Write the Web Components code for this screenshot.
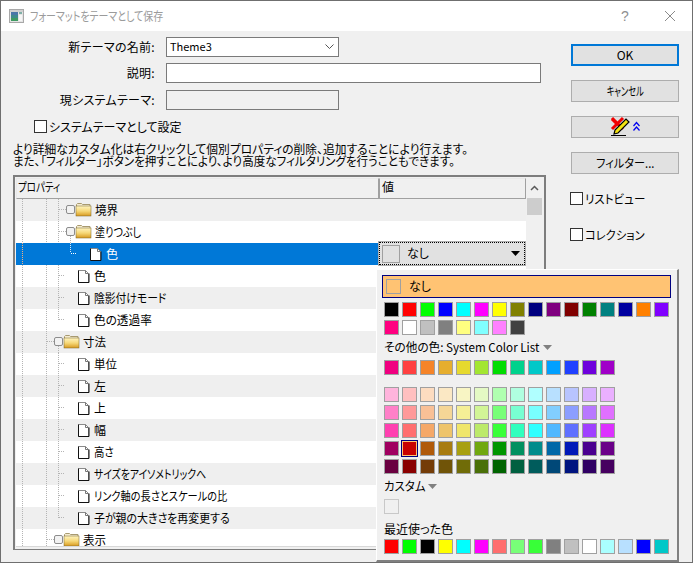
<!DOCTYPE html>
<html lang="ja">
<head>
<meta charset="utf-8">
<title>フォーマットをテーマとして保存</title>
<style>
  html, body { margin: 0; padding: 0; background: #f0f0f0; }
  body { font: 12px "Noto Sans CJK JP", "Liberation Sans", sans-serif; color: #000; }
</style>
</head>
<body>
<theme-dialog>
  <title-bar slot="title">フォーマットをテーマとして保存</title-bar>

  <form-row slot="left" label="新テーマの名前:" kind="combo" width="173" value="Theme3"></form-row>
  <form-row slot="left" label="説明:" kind="text" width="375" gap="6"></form-row>
  <form-row slot="left" label="現システムテーマ:" kind="readonly" width="173" gap="7"></form-row>
  <check-box slot="left" style="margin:10px 0 0 21px">システムテーマとして設定</check-box>
  <help-text slot="left"></help-text>

  <prop-grid slot="left">
    <tree-row depth="2" kind="folder" lines="22 46 58" alt style="--sx:.96">境界</tree-row>
    <tree-row depth="2" kind="folder" lines="22 46 58" open style="--sx:.84">塗りつぶし</tree-row>
    <tree-row depth="3" kind="file" lines="22" selected>色<value-button slot="value">なし</value-button></tree-row>
    <tree-row depth="2" kind="file" lines="22 46 58">色</tree-row>
    <tree-row depth="2" kind="file" lines="22 46 58" alt style="--sx:.9">陰影付けモード</tree-row>
    <tree-row depth="2" kind="file" lines="22 46" half="58" style="--sx:.97">色の透過率</tree-row>
    <tree-row depth="1" kind="folder" lines="22 46" alt open style="--sx:.96">寸法</tree-row>
    <tree-row depth="2" kind="file" lines="22 46 58" style="--sx:.96">単位</tree-row>
    <tree-row depth="2" kind="file" lines="22 46 58" alt>左</tree-row>
    <tree-row depth="2" kind="file" lines="22 46 58">上</tree-row>
    <tree-row depth="2" kind="file" lines="22 46 58" alt>幅</tree-row>
    <tree-row depth="2" kind="file" lines="22 46 58" style="--sx:.87">高さ</tree-row>
    <tree-row depth="2" kind="file" lines="22 46 58" alt style="--sx:.82">サイズをアイソメトリックへ</tree-row>
    <tree-row depth="2" kind="file" lines="22 46 58" style="--sx:.85">リンク軸の長さとスケールの比</tree-row>
    <tree-row depth="2" kind="file" lines="22 46" half="58" alt style="--sx:.91">子が親の大きさを再変更する</tree-row>
    <tree-row depth="1" kind="folder" lines="22 46" style="--sx:.96">表示</tree-row>
  </prop-grid>

  <push-button slot="right" default>OK</push-button>
  <push-button slot="right" style="--sx:.68">キャンセル</push-button>
  <push-button slot="right">
    <svg width="34" height="22" viewBox="0 0 34 22" style="display:block;margin-left:4px" shape-rendering="crispEdges">
      <path d="M2 3l11 11M13 3L2 14" stroke="#f00000" stroke-width="3" fill="none" shape-rendering="auto"/>
      <path d="M5 15L16 4l3 3L8 18l-4 1z" fill="#f4e310" stroke="#000" stroke-width="1.200" shape-rendering="auto"/>
      <path d="M2 4l6 6" stroke="#f00000" stroke-width="3" fill="none" shape-rendering="auto"/>
      <rect x="1" y="20" width="15" height="1" fill="#000"/>
      <path d="M23.500 11l3-3.500 3 3.500M23.500 15.500l3-3.500 3 3.500" stroke="#0000f0" stroke-width="1.200" fill="none" shape-rendering="auto"/>
    </svg>
  </push-button>
  <push-button slot="right" style="--sx:.93">フィルター...</push-button>
  <check-box slot="right" style="margin:4px 0 0 -1px;--sx:.96">リストビュー</check-box>
  <check-box slot="right" style="margin:23px 0 0 -1px;--sx:.94">コレクション</check-box>

  <color-popup slot="popup"></color-popup>
</theme-dialog>

<script>
class ThemeDialog extends HTMLElement {
  constructor () {
    super()
    this.attachShadow({ mode: 'open' })
  }

  connectedCallback () {
    this.shadowRoot.innerHTML = `
      <style>
        :host {
          display: flex;
          flex-direction: column;
          position: relative;
          box-sizing: border-box;
          width: 693px;
          height: 563px;
          border: 1px solid #6f6f6f;
          background: #f0f0f0;
          overflow: hidden;
        }
        .body {
          display: flex;
          gap: 25px;
          padding-left: 12px;
          flex: 1;
          min-height: 0;
        }
        .left { display: flex; flex-direction: column; width: 533px; padding-top: 6px; }
        .right { display: flex; flex-direction: column; width: 108px; padding-top: 13px; }
      </style>
      <slot name="title"></slot>
      <div class="body">
        <div class="left"><slot name="left"></slot></div>
        <div class="right"><slot name="right"></slot></div>
      </div>
      <slot name="popup"></slot>
    `
  }
}

class TitleBar extends HTMLElement {
  constructor () {
    super()
    this.attachShadow({ mode: 'open' })
  }

  connectedCallback () {
    this.shadowRoot.innerHTML = `
      <style>
        :host {
          display: flex;
          align-items: center;
          flex: none;
          height: 30px;
          background: #fff;
          color: #9b9b9b;
          font-size: 12px;
          padding-left: 8px;
        }
        svg { flex: none; display: block; }
        .grow { flex: 1; margin-left: 6px; padding-bottom: 2px; }
        .text { display: inline-block; font-feature-settings: "palt"; transform: scaleX(.83); transform-origin: left; white-space: nowrap; }
        .help { font: 14px "Liberation Sans", sans-serif; width: 14px; text-align: center; margin-right: 33px; color: #8f8f8f; }
        .close { margin-right: 17px; }
      </style>
      <svg width="15" height="15" viewBox="0 0 15 15" shape-rendering="crispEdges">
        <rect x="0.500" y="0.500" width="14" height="13" fill="#e4e4e4" stroke="#a8a8a8"/>
        <rect x="1" y="1" width="13" height="2" fill="#d0d0d0"/>
        <rect x="2" y="3" width="7" height="9" fill="#3f8a8c"/>
        <rect x="2" y="3" width="7" height="3" fill="#4a76a8"/>
        <rect x="2" y="9" width="7" height="3" fill="#3f9a62"/>
        <rect x="10" y="3" width="3" height="2" fill="#7fb0a8"/>
        <rect x="10" y="6" width="3" height="6" fill="#f6f6f6"/>
      </svg>
      <div class="grow"><span class="text"><slot></slot></span></div>
      <span class="help">?</span>
      <svg class="close" width="10" height="10" viewBox="0 0 10 10">
        <path d="M0 0l10 10M10 0L0 10" stroke="#8a8a8a" stroke-width="1" fill="none"/>
      </svg>
    `
  }
}

class FormRow extends HTMLElement {
  constructor () {
    super()
    this.attachShadow({ mode: 'open' })
  }

  connectedCallback () {
    const kind = this.getAttribute('kind')
    const width = this.getAttribute('width')
    const gap = this.getAttribute('gap') || 0
    const value = this.getAttribute('value') || ''
    const arrow = kind === 'combo'
      ? '<svg width="9" height="6" viewBox="0 0 9 6"><path d="M.5 .5l4 4 4-4" stroke="#555" fill="none"/></svg>'
      : ''
    this.shadowRoot.innerHTML = `
      <style>
        :host { display: flex; align-items: center; gap: 11px; margin-top: ${gap}px; height: 20px; }
        .label { width: 142px; text-align: right; font-feature-settings: "palt"; letter-spacing: 0.3px; white-space: nowrap; padding-bottom: 1px; }
        .field {
          box-sizing: border-box;
          width: ${width}px;
          height: 20px;
          border: 1px solid #7a7a7a;
          background: ${kind === 'readonly' ? '#f0f0f0' : '#fff'};
          display: flex;
          align-items: center;
          justify-content: space-between;
          padding: 0 4px 0 3px;
          font-size: 11px;
        }
        .field span { padding-bottom: 3px; }
      </style>
      <span class="label">${this.getAttribute('label')}</span>
      <div class="field"><span>${value}</span>${arrow}</div>
    `
  }
}

class CheckBox extends HTMLElement {
  constructor () {
    super()
    this.attachShadow({ mode: 'open' })
  }

  connectedCallback () {
    this.shadowRoot.innerHTML = `
      <style>
        :host { display: flex; align-items: center; gap: 2px; height: 13px; white-space: nowrap; font-size: 12px; }
        i { flex: none; box-sizing: border-box; width: 13px; height: 13px; border: 1px solid #333; background: #fff; }
        span { display: inline-block; font-feature-settings: "palt"; transform: scaleX(var(--sx, 1)); transform-origin: left; }
      </style>
      <i></i><span><slot></slot></span>
    `
  }
}

class HelpText extends HTMLElement {
  constructor () {
    super()
    this.attachShadow({ mode: 'open' })
  }

  connectedCallback () {
    this.shadowRoot.innerHTML = `
      <style>
        :host { display: block; margin-top: 10px; height: 24px; line-height: 12px; font-size: 12px; white-space: nowrap; font-feature-settings: "palt"; }
        div { transform-origin: left; height: 12px; }
      </style>
      <div style="transform:scaleX(.98)">より詳細なカスタム化は右クリックして個別プロパティの削除、追加することにより行えます。</div>
      <div style="transform:scaleX(.962)">また、「フィルター」ボタンを押すことにより、より高度なフィルタリングを行うこともできます。</div>
    `
  }
}

class PushButton extends HTMLElement {
  constructor () {
    super()
    this.attachShadow({ mode: 'open' })
  }

  connectedCallback () {
    const isDefault = this.hasAttribute('default')
    this.shadowRoot.innerHTML = `
      <style>
        :host {
          display: flex;
          align-items: center;
          justify-content: center;
          box-sizing: border-box;
          height: 22px;
          margin-bottom: 14px;
          background: #e1e1e1;
          border: ${isDefault ? '2px solid #0078d7' : '1px solid #adadad'};
          font-size: 12px;
          font-feature-settings: "palt";
          white-space: nowrap;
        }
        span { display: block; padding-bottom: 2px; transform: scaleX(var(--sx, 1)); }
      </style>
      <span><slot></slot></span>
    `
  }
}

class PropGrid extends HTMLElement {
  constructor () {
    super()
    this.attachShadow({ mode: 'open' })
  }

  connectedCallback () {
    this.shadowRoot.innerHTML = `
      <style>
        :host {
          display: flex;
          box-sizing: border-box;
          width: 533px;
          height: 375px;
          margin-top: 8px;
          border: 2px solid #7d7d7d;
          border-bottom-width: 1px;
          padding: 1px 1px 1px 1px;
          background: #f0f0f0;
        }
        .main { width: 510px; flex: none; display: flex; flex-direction: column; }
        .head { display: flex; height: 21px; flex: none; }
        .head div {
          box-sizing: border-box;
          height: 21px;
          border: 1px solid #a0a0a0;
          padding-left: 1px;
          line-height: 16px;
          font-size: 12px;
          font-feature-settings: "palt";
        }
        .head span { display: inline-block; transform-origin: left; transform: scaleX(.79); }
        .head .a { width: 363px; border-left-color: #e8e8e8; border-top-color: #e8e8e8; }
        .head .b { width: 147px; border-left-color: #a0a0a0; border-top-color: #e8e8e8; padding-left: 2px; }
        .rows { height: 348px; overflow: hidden; background: #fff; border-bottom: 1px solid #d8d8d8; flex: none; box-sizing: border-box; }
        .bar { width: 17px; flex: none; display: flex; flex-direction: column; }
        .up { height: 20px; display: flex; align-items: center; justify-content: center; }
        .thumb { height: 17px; background: #cdcdcd; margin: 0 1px; }
      </style>
      <div class="main">
        <div class="head"><div class="a"><span>プロパティ</span></div><div class="b">値</div></div>
        <div class="rows"><slot></slot></div>
      </div>
      <div class="bar">
        <div class="up"><svg width="9" height="6" viewBox="0 0 9 6"><path d="M1 5l3.500-3.500L8 5" stroke="#5a5a5a" stroke-width="1.500" fill="none"/></svg></div>
        <div class="thumb"></div>
      </div>
    `
  }
}

class TreeRow extends HTMLElement {
  constructor () {
    super()
    this.attachShadow({ mode: 'open' })
  }

  connectedCallback () {
    const depth = +this.getAttribute('depth')
    const kind = this.getAttribute('kind')
    const selected = this.hasAttribute('selected')
    const alt = this.hasAttribute('alt')
    const lines = (this.getAttribute('lines') || '').split(' ').filter(Boolean).map(Number)
    const half = this.getAttribute('half')
    const open = this.hasAttribute('open')

    // x positions are page pixels, the svg's viewBox starts at the grid's left edge
    const spots = {
      folder1: { from: 46, box: 54, icon: 64, text: 83 },
      folder2: { from: 58, box: 66, icon: 76, text: 95 },
      file2: { from: 58, icon: 78, text: 94 },
      file3: { from: 70, icon: 90, text: 106 }
    }
    const s = spots[kind + depth]
    const dot = selected ? '#f0b080' : '#b4b4b4'
    const dash = 'stroke-dasharray="1 1" fill="none" shape-rendering="crispEdges"'
    let g = ''
    for (const x of lines) g += `<path d="M${x + 0.5} 0V22" stroke="${dot}" ${dash}/>`
    if (half) g += `<path d="M${+half + 0.5} 0V11" stroke="${dot}" ${dash}/>`
    g += `<path d="M${s.from + 1} 10.500H${s.box || s.from + 7}" stroke="${selected ? '#fff' : '#b4b4b4'}" ${dash}/>`
    if (selected) g += `<path d="M70.500 0V10" stroke="#d8e8f8" ${dash}/>`
    if (s.box) {
      if (open) g += `<path d="M${s.box + 4.5} 15V22" stroke="#b4b4b4" ${dash}/>`
      g += `<rect x="${s.box + 0.5}" y="6.500" width="8" height="8" rx="1.500" fill="#f2f2f2" stroke="#8c8c8c"/>`
    }
    const x = s.icon
    if (kind === 'folder') {
      g += `<path d="M${x + 0.5} 7.500V5.500l1-1h4l1 1h7.500v2" fill="#f5ecd0" stroke="#a89a70"/>
        <rect x="${x}" y="7" width="15" height="10" fill="url(#fold)" stroke="#7a6428" stroke-width="0.500"/>`
    } else {
      g += `<path d="M${x + 0.5} 5.500h7l3 3v9h-10z" fill="#fff" stroke="#8a8a8a"/>
        <path d="M${x + 0.5} 5.500v12h10.500V8.500" fill="none" stroke="#111"/>
        <path d="M${x + 7.5} 5.500v3h3" fill="none" stroke="#777"/>`
    }

    this.shadowRoot.innerHTML = `
      <style>
        :host {
          display: flex;
          height: 22px;
          background: ${selected ? '#0078d7' : alt ? '#efefef' : '#fff'};
          color: ${selected ? '#fff' : '#000'};
          font-size: 12px;
          white-space: nowrap;
        }
        .tree { width: 362px; flex: none; display: flex; align-items: center; height: 22px; font-feature-settings: "palt"; }
        svg { flex: none; display: block; }
        .label { display: inline-block; padding-bottom: 2px; transform: scaleX(var(--sx, 1)); transform-origin: left; }
        .value { width: 148px; flex: none; color: #000; position: relative; }
      </style>
      <div class="tree">
        <svg width="${s.text - 16}" height="22" viewBox="16 0 ${s.text - 16} 22">
          <defs>
            <linearGradient id="fold" x1="0" y1="0" x2="0" y2="1">
              <stop offset="0" stop-color="#fff4c0"/><stop offset="0.500" stop-color="#f6d878"/><stop offset="1" stop-color="#d89a20"/>
            </linearGradient>
          </defs>
          ${g}
        </svg>
        <span class="label"><slot></slot></span>
      </div>
      <div class="value"><slot name="value"></slot></div>
    `
  }
}

class ValueButton extends HTMLElement {
  constructor () {
    super()
    this.attachShadow({ mode: 'open' })
  }

  connectedCallback () {
    this.shadowRoot.innerHTML = `
      <style>
        :host {
          display: flex;
          align-items: center;
          box-sizing: border-box;
          width: 148px;
          height: 25px;
          margin-top: -2px;
          background: #e1e1e1;
          border: 1px solid #adadad;
          outline: 1px dotted #000;
          outline-offset: -2px;
          padding: 0 4px 0 3px;
          font-size: 12px;
          font-feature-settings: "palt";
        }
        i { flex: none; box-sizing: border-box; width: 18px; height: 18px; border: 1px solid #a0a0a0; background: #e1e1e1; }
        span { flex: 1; margin-left: 7px; padding-bottom: 2px; }
        svg { display: block; flex: none; margin-right: 1px; }
      </style>
      <i></i><span><slot></slot></span>
      <svg width="9" height="5" viewBox="0 0 9 5"><path d="M0 0h9L4.500 5z" fill="#000"/></svg>
    `
  }
}

class SwatchRow extends HTMLElement {
  constructor () {
    super()
    this.attachShadow({ mode: 'open' })
  }

  connectedCallback () {
    const picked = this.hasAttribute('picked') ? +this.getAttribute('picked') : -1
    const faint = this.hasAttribute('faint')
    const cells = this.getAttribute('colors').split(' ').map((c, i) =>
      `<i class="${i === picked ? 'on' : ''}" style="background:${c}${faint ? ';border-color:#c8c8c8' : ''}"></i>`).join('')
    this.shadowRoot.innerHTML = `
      <style>
        :host { display: flex; gap: 3px; height: 15px; }
        i { box-sizing: border-box; width: 15px; height: 15px; border: 1px solid #a0a0a0; flex: none; }
        i.on { border-color: #ffc373; box-shadow: 0 0 0 1px #000080; }
      </style>
      ${cells}
    `
  }
}

class ColorPopup extends HTMLElement {
  constructor () {
    super()
    this.attachShadow({ mode: 'open' })
  }

  connectedCallback () {
    const tints = [
      '#ffb4dc #ffc0c0 #fddcc0 #fbe8c4 #f8f5c4 #e4f9c4 #b0ffb0 #b0ffe0 #b0ffff #b8e0ff #b8c4ff #d8b0ff #eab0ff',
      '#ff80c8 #ff9999 #f9c096 #f5d696 #f5ef96 #d2f596 #78ff78 #78ffd2 #78ffff #82ceff #8c9eff #b878ff #e070ff',
      '#ff40b0 #ff6e6e #f5a868 #eec46a #f0e66a #bcea6a #38ff38 #30ffbe #30ffff #50b8ff #6070ff #a040ff #dc30ff',
      '#a00060 #c80000 #b05a0a #a87c10 #a8a010 #70a810 #009600 #009060 #008c8c #0068a8 #0018b8 #4a0090 #6a0088',
      '#6a0040 #8a0000 #743c08 #705408 #706c08 #4a7008 #006400 #006040 #005c5c #004878 #001480 #300064 #460060'
    ]
    const tri = ml => `<svg style="margin-left:${ml}px" width="9" height="5" viewBox="0 0 9 5"><path d="M0 0h9L4.500 5z" fill="#808080"/></svg>`
    this.shadowRoot.innerHTML = `
      <style>
        :host {
          display: flex;
          flex-direction: column;
          position: absolute;
          left: 375px;
          top: 268px;
          box-sizing: border-box;
          width: 303px;
          height: 293px;
          padding: 5px 0 0 7px;
          background: #f0f0f0;
          border: 1px solid #fff;
          border-right: 2px solid #808080;
          border-bottom: 2px solid #808080;
          font-size: 12px;
          white-space: nowrap;
        }
        .none {
          display: flex;
          align-items: center;
          box-sizing: border-box;
          width: 289px;
          height: 23px;
          margin-left: -2px;
          border: 1px solid #000080;
          background: #ffc373;
          padding-left: 3px;
          gap: 8px;
          font-feature-settings: "palt";
        }
        .none i { box-sizing: border-box; width: 15px; height: 15px; border: 1px solid #a0a0a0; }
        .none span { padding-bottom: 2px; }
        .list { display: flex; flex-direction: column; gap: 3px; }
        .cap { display: flex; align-items: center; height: 14px; font-feature-settings: "palt"; }
        .cap span { display: inline-block; padding-bottom: 2px; transform-origin: left; }
      </style>
      <div class="none"><i></i><span>なし</span></div>
      <div class="list" style="margin-top:4px">
        <swatch-row colors="#000 #f00 #0f0 #00f #0ff #f0f #ff0 #808000 #000080 #800080 #800000 #008000 #008080 #0000a0 #ff8000 #8000ff"></swatch-row>
        <swatch-row colors="#ff0080 #fff #c0c0c0 #808080 #ffff80 #80ffff #ff80ff #404040"></swatch-row>
      </div>
      <div class="cap" style="margin-top:5px"><span style="transform:scaleX(.97)">その他の色: System Color List</span>${tri(-1)}</div>
      <swatch-row style="margin-top:6px" colors="#f00080 #ff4040 #f58428 #e6ae2e #e6d92e #a3e632 #00dc00 #00d28c #00c8c8 #00a0ff #2040ff #6e00dc #a000c8"></swatch-row>
      <div class="list" style="margin-top:12px">
        ${tints.map((t, i) => `<swatch-row colors="${t}"${i === 3 ? ' picked="1"' : ''}></swatch-row>`).join('')}
      </div>
      <div class="cap" style="margin-top:5px"><span style="transform:scaleX(.95)">カスタム</span>${tri(0)}</div>
      <swatch-row style="margin-top:6px" faint colors="#f0f0f0"></swatch-row>
      <div class="cap" style="margin-top:8px"><span>最近使った色</span></div>
      <swatch-row style="margin-top:3px" colors="#f00 #0f0 #000 #ff0 #0ff #f0f #ff6e6e #78ff78 #38ff38 #808080 #c0c0c0 #fff #aaffff #b8e0ff #00f #00c8c8"></swatch-row>
    `
  }
}

customElements.define('theme-dialog', ThemeDialog)
customElements.define('title-bar', TitleBar)
customElements.define('form-row', FormRow)
customElements.define('check-box', CheckBox)
customElements.define('help-text', HelpText)
customElements.define('push-button', PushButton)
customElements.define('prop-grid', PropGrid)
customElements.define('tree-row', TreeRow)
customElements.define('value-button', ValueButton)
customElements.define('swatch-row', SwatchRow)
customElements.define('color-popup', ColorPopup)
</script>
</body>
</html>
